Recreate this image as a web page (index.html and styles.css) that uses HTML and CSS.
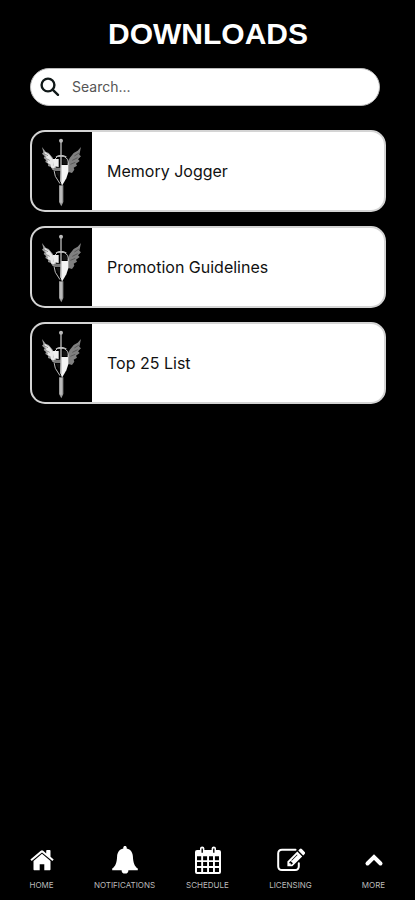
FILE: index.html
```html
<!DOCTYPE html>
<html lang="en">
<head>
    <meta charset="UTF-8">
    <meta name="viewport" content="width=device-width, initial-scale=1.0">
    <title>Downloads</title>
    <link rel="stylesheet" href="styles.css">
</head>
<body>
    <!-- emblem shared by all download cards -->
    <svg class="sprite" aria-hidden="true">
        <symbol id="emblem" viewBox="0 0 138 240">
            <path fill="#999" d="M12 48l11 14 9 4 12 14 9 22 3 18-13-4-4-8-9-3 1-7-9-5 2-6-7-6 3-5-8-8 4-4z"/>
            <path fill="#e8e8e8" d="M20 62l15 10 11 16 6 24-12-2-3-10-9-4 2-6-8-8 4-4-7-9z"/>
            <path fill="#808080" d="M129 48l-10 11-12 7-12 15-7 17 1 24 13 4 7-10-2-6 10-6-3-6 11-8-5-5 9-9-5-5z"/>
            <path fill="none" stroke="#333" stroke-width="1.500" d="M18 68l12 6M23 82l12 6M123 66l-14 9M119 80l-16 8M112 94l-15 6"/>
            <path fill="none" stroke="#bbb" stroke-width="3" d="M46 104l4-19 9-9h19l11 9 3 17M48 118l4 18 14 22"/>
            <path fill="#eee" d="M44 84h18v24l-14-2z"/>
            <path fill="#777" d="M48 110h20v10H50z"/>
            <path fill="#f5f5f5" d="M69 102h22v22l-6 18-13 22-5-15z"/>
            <path fill="#111" d="M74 84h13v15H74zM53 122h12v20z"/>
            <path fill="none" stroke="#bbb" stroke-width="4" d="M69 32v120M54 78q15-9 31 0"/>
            <circle cx="69" cy="29" r="6" fill="#bbb"/>
            <path fill="#999" d="M63 163h13v50l-6 13-7-13z"/>
            <path fill="none" stroke="#ccc" stroke-width="4" d="M69 165v50"/>
        </symbol>
    </svg>

    <main class="page">
        <h1 class="title">DOWNLOADS</h1>

        <form class="search">
            <label class="search-label" for="search" aria-label="Search">
                <svg class="search-icon" viewBox="0 0 20 20" aria-hidden="true">
                    <circle cx="8" cy="8" r="6.4"/>
                    <path d="M12.6 12.6l5.4 5.2"/>
                </svg>
            </label>
            <input class="search-input" id="search" type="text" placeholder="Search...">
        </form>

        <ul class="list">
            <li>
                <a class="card" href="#">
                    <span class="card-thumb"><svg class="emblem" aria-hidden="true"><use href="#emblem"/></svg></span>
                    <span class="card-name">Memory Jogger</span>
                </a>
            </li>
            <li>
                <a class="card" href="#">
                    <span class="card-thumb"><svg class="emblem" aria-hidden="true"><use href="#emblem"/></svg></span>
                    <span class="card-name">Promotion Guidelines</span>
                </a>
            </li>
            <li>
                <a class="card" href="#">
                    <span class="card-thumb"><svg class="emblem" aria-hidden="true"><use href="#emblem"/></svg></span>
                    <span class="card-name">Top 25 List</span>
                </a>
            </li>
        </ul>
    </main>

    <nav class="nav">
        <a class="nav-item" href="#">
            <svg class="nav-icon" viewBox="0 0 28 28" aria-hidden="true">
                <path d="M14 7.8l8.5 7.2v8.2c0 .6-.4 1-1 1h-5.2v-6h-4.6v6H6.5c-.6 0-1-.4-1-1V15z"/>
                <path d="M2.4 13.6L12.8 4.8q1.2-1 2.400 0l3 2.600V4.800q0-.8.800-.8h2.700q.8 0 .8.800v6l3.200 2.800-1.300 1.500L14 6.400 3.700 15.100z"/>
            </svg>
            <span>HOME</span>
        </a>
        <a class="nav-item" href="#">
            <svg class="nav-icon" viewBox="0 0 28 28" aria-hidden="true">
                <path d="M14 0c1 0 1.700.7 1.700 1.600v.8c4 .8 6 4 6.200 8 .3 6.600 1.600 9.600 4.900 12.100v1.700h-9.400a3.400 3.400 0 0 1-6.800 0H1.200v-1.700c3.300-2.500 4.600-5.500 4.900-12.100.2-4 2.200-7.200 6.200-8v-.8C12.300.7 13 0 14 0z"/>
            </svg>
            <span>NOTIFICATIONS</span>
        </a>
        <a class="nav-item" href="#">
            <svg class="nav-icon" viewBox="0 0 28 28" aria-hidden="true">
                <path fill-rule="evenodd" d="M3 4h3V2.600a2.200 2.200 0 0 1 4.400 0V4h7.200V2.600a2.200 2.200 0 0 1 4.400 0V4h3q2 0 2 2v20q0 2-2 2H3q-2 0-2-2V6q0-2 2-2zM7.500 2.600v4.200h1.400V2.600zM19.100 2.600v4.200h1.400V2.600zM3 10.200v4h4.200v-4zM9.100 10.200v4h4v-4zM15 10.200v4h4v-4zM20.900 10.200v4H25v-4zM3 16.100v4h4.200v-4zM9.100 16.100v4h4v-4zM15 16.100v4h4v-4zM20.900 16.100v4H25v-4zM3 22v4h4.200v-4zM9.100 22v4h4v-4zM15 22v4h4v-4zM20.900 22v4H25v-4z"/>
            </svg>
            <span>SCHEDULE</span>
        </a>
        <a class="nav-item" href="#">
            <svg class="nav-icon" viewBox="0 0 28 28" aria-hidden="true">
                <path class="line" d="M18.500 3.700H5Q1.200 3.700 1.200 7.500v12.700Q1.200 24 5 24h13q3.800 0 3.800-3.800v-3"/>
                <path fill-rule="evenodd" d="M20.300 5.500l4.900 4.900-9.900 9.900h-4.900v-4.900zM12.300 16.200v1h1.400v1.400h1l1.300-1.300-2.400-2.400zM20 8.600l-5.700 5.700.5.500 5.700-5.700z"/>
                <path d="M21.300 4.500l1.500-1.500q1-1 2 0l2.900 2.900q1 1 0 2l-1.500 1.500z"/>
            </svg>
            <span>LICENSING</span>
        </a>
        <a class="nav-item" href="#">
            <svg class="nav-icon" viewBox="0 0 28 28" aria-hidden="true">
                <path class="chevron" d="M7.500 17.500L14 11l6.500 6.500"/>
            </svg>
            <span>MORE</span>
        </a>
    </nav>
</body>
</html>
```
FILE: styles.css
```css
* {
    margin: 0;
    padding: 0;
    list-style: none;
    box-sizing: border-box;
}
body {
    display: flex;
    flex-direction: column;
    min-height: 100vh;
    background-color: #000;
    font-family: Inter, "Liberation Sans", sans-serif;
}
a {
    color: inherit;
    text-decoration: none;
}
.sprite {
    display: none;
}
.page {
    flex: 1;
    padding: 16px 29px 16px 30px;
}
.title {
    color: #fff;
    font: bold 30px/36px "Liberation Sans", Arial, sans-serif;
    text-align: center;
}

/* search */
.search {
    display: flex;
    align-items: center;
    gap: 12px;
    height: 38px;
    margin: 16px 6px 24px 0;
    padding: 0 9px;
    border: 1px solid #bbb;
    border-radius: 19px;
    background-color: #fff;
}
.search-icon {
    display: block;
    width: 20px;
    height: 20px;
    fill: none;
    stroke: #101818;
    stroke-width: 2.4;
    stroke-linecap: round;
}
.search-input {
    flex: 1;
    min-width: 0;
    border: none;
    outline: none;
    background: none;
    color: #333;
    font: 14px/20px Inter, "Liberation Sans", sans-serif;
}
.search-input::placeholder {
    color: #555;
    opacity: 1;
}

/* cards */
.list {
    display: grid;
    gap: 14px;
}
.card {
    display: flex;
    height: 82px;
    overflow: hidden;
    border: 2px solid #d4d4d4;
    border-radius: 15px;
    background-color: #fff;
}
.card-thumb {
    display: flex;
    align-items: center;
    justify-content: center;
    width: 60px;
    padding-right: 2px;
    background-color: #000;
}
.emblem {
    width: 46px;
    height: 80px;
}
.card-name {
    flex: 1;
    align-self: center;
    padding: 0 15px;
    color: #111;
    font-size: 16px;
    line-height: 20px;
}

/* bottom bar */
.nav {
    display: grid;
    grid-template-columns: repeat(5, 1fr);
    padding: 0 0 9px;
}
.nav-item {
    display: flex;
    flex-direction: column;
    align-items: center;
    gap: 5px;
    color: #bbb;
    font-size: 8px;
    line-height: 12px;
}
.nav-icon {
    width: 28px;
    height: 28px;
    fill: #fff;
}
.line {
    fill: none;
    stroke: #fff;
    stroke-width: 2;
    stroke-linecap: round;
}
.chevron {
    fill: none;
    stroke: #fff;
    stroke-width: 4;
    stroke-linecap: round;
}
```
